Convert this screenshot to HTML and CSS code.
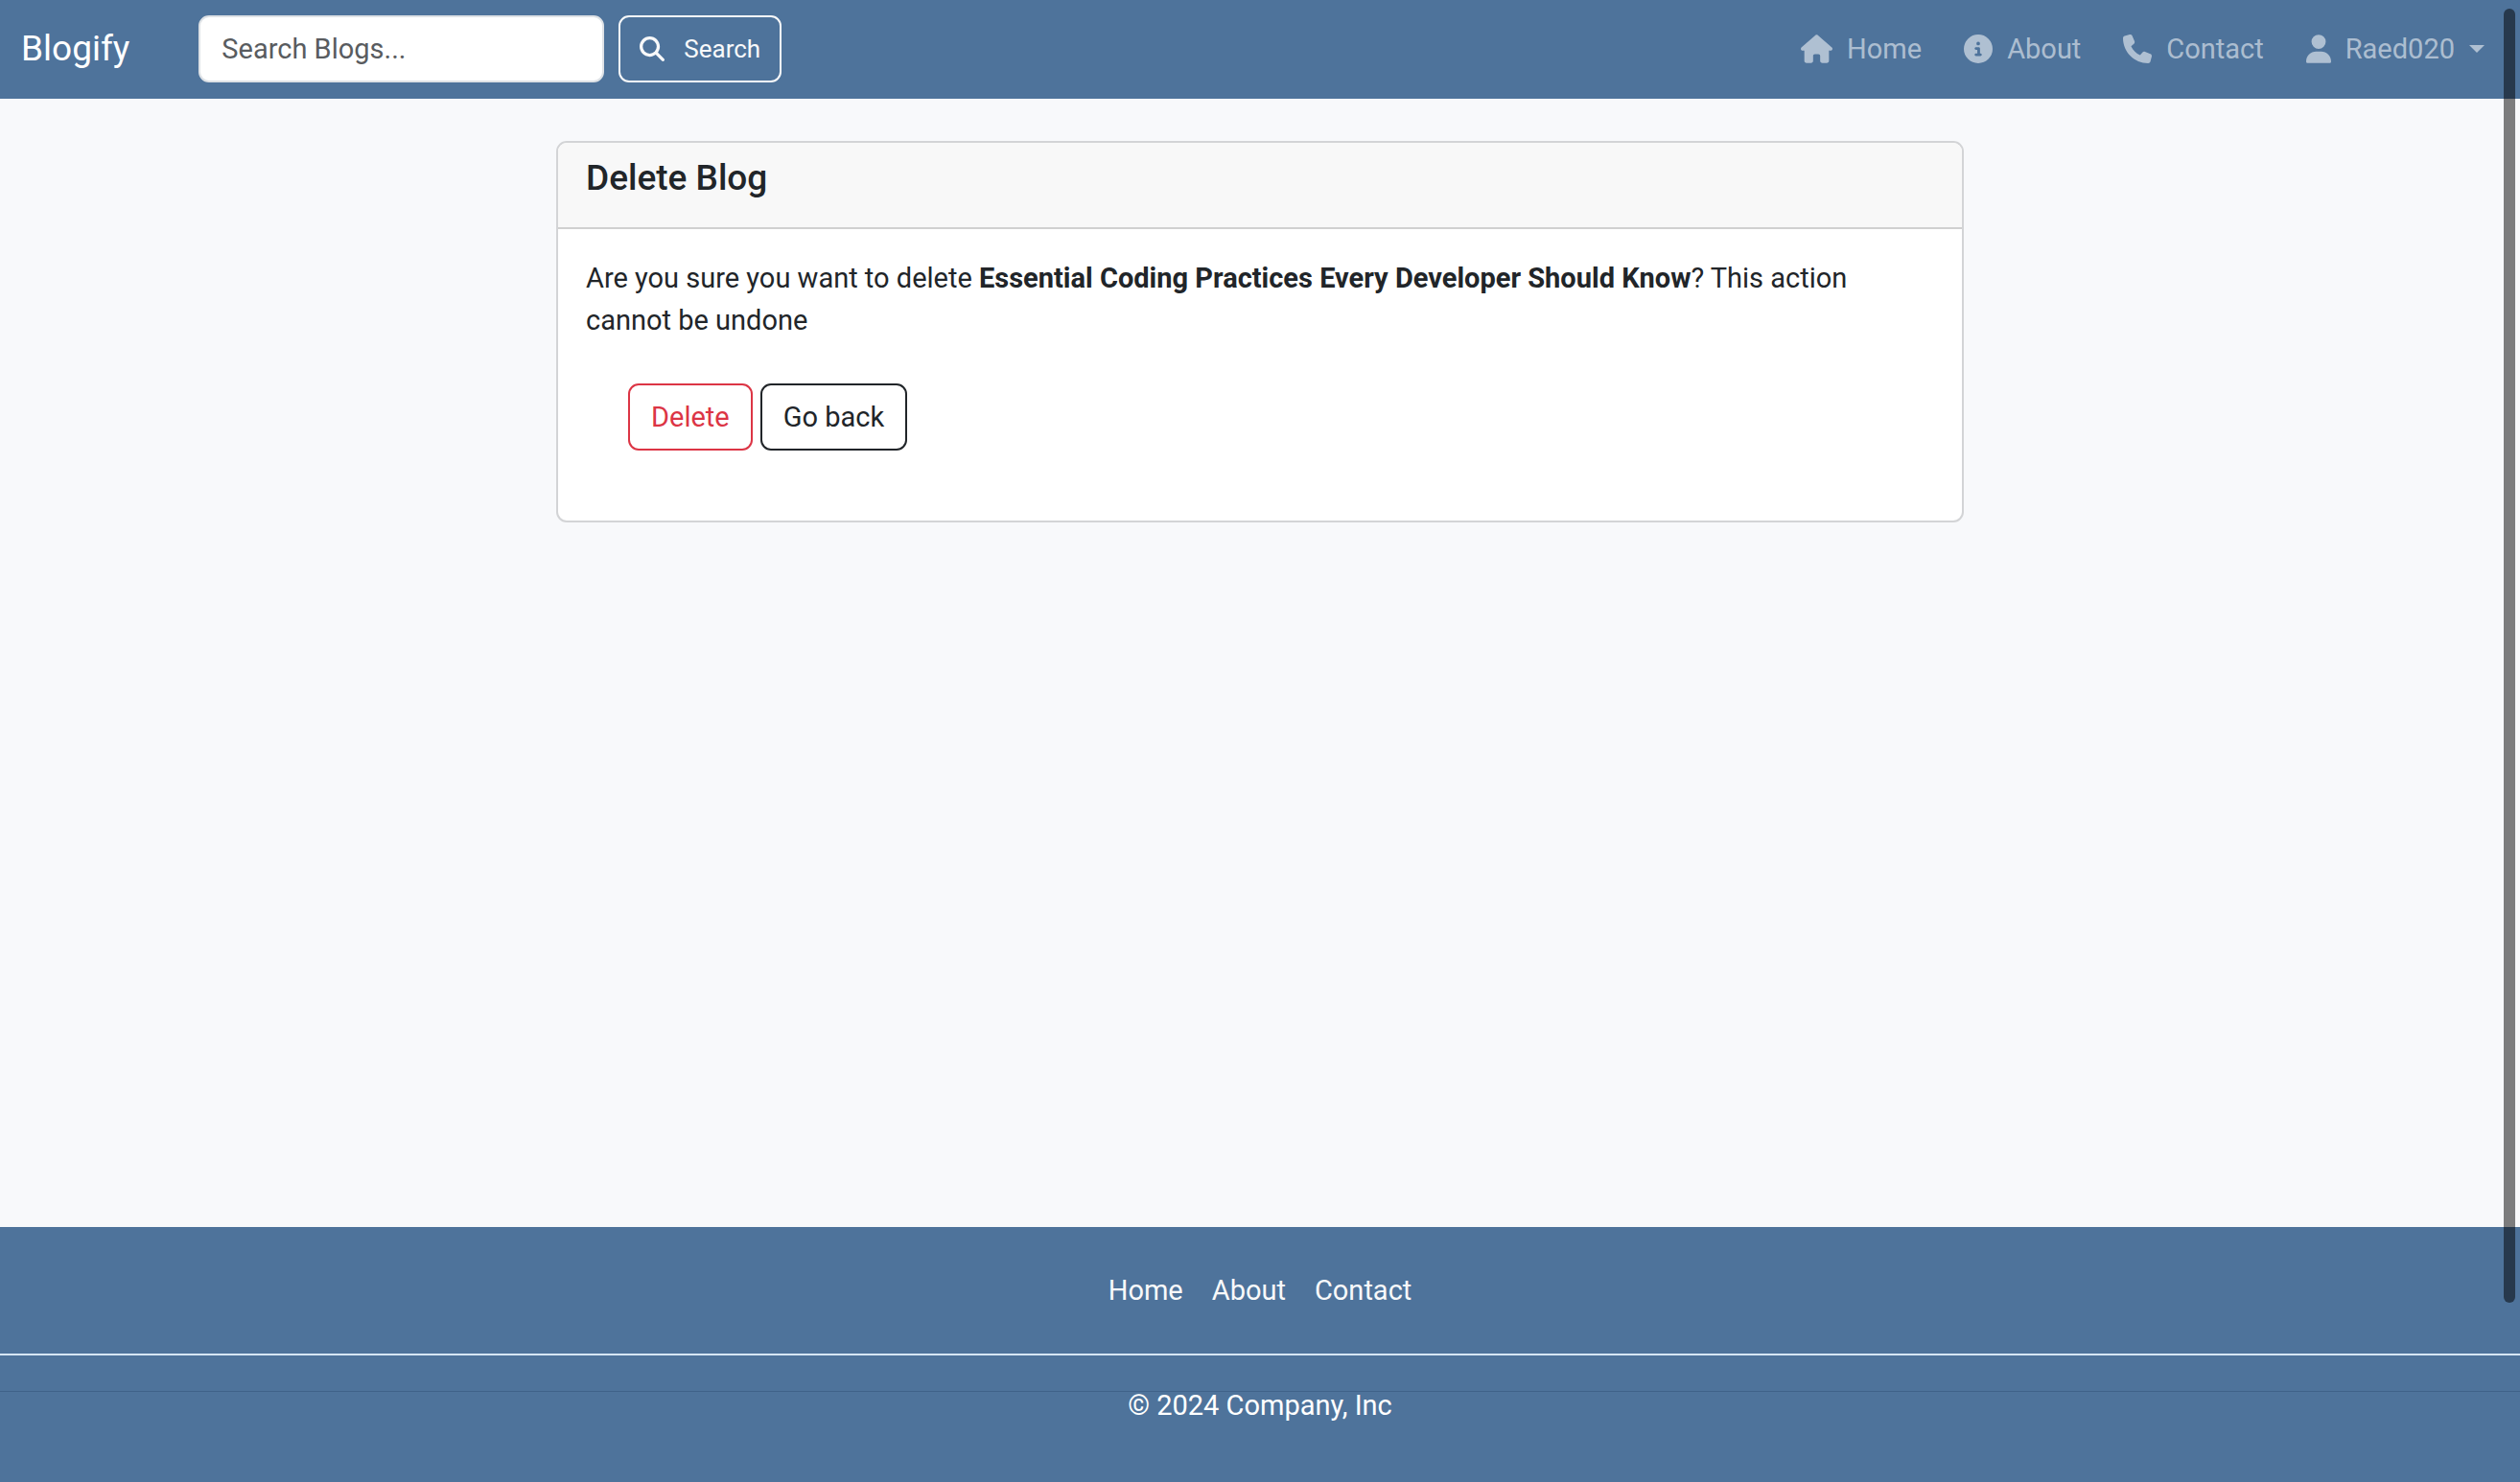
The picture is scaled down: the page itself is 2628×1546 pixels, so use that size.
FILE: index.html
```html
<!DOCTYPE html>
<html lang="en">
<head>
<meta charset="utf-8">
<meta name="viewport" content="width=device-width, initial-scale=1">
<title>Blogify - Delete Blog</title>
<link rel="stylesheet" href="styles.css">
</head>
<body>
<header class="navbar">
  <a class="brand" href="#">Blogify</a>
  <form class="search">
    <input class="search-input" type="search" placeholder="Search Blogs..." aria-label="Search Blogs">
    <button class="btn btn-light" type="submit">
      <svg class="icon icon-small" viewBox="0 0 512 512" aria-hidden="true"><path d="M416 208c0 45.900-14.900 88.300-40 122.700L502.600 457.400c12.500 12.500 12.500 32.800 0 45.300s-32.800 12.500-45.300 0L330.700 376c-34.400 25.200-76.800 40-122.700 40C93.100 416 0 322.900 0 208S93.100 0 208 0S416 93.100 416 208zM208 352a144 144 0 1 0 0-288 144 144 0 1 0 0 288z"/></svg>
      <span>Search</span>
    </button>
  </form>
  <nav class="menu" aria-label="Main">
    <a class="menu-link" href="#">
      <svg class="icon icon-wide" viewBox="0 0 576 512" aria-hidden="true"><path d="M575.800 255.500c0 18-15 32.100-32 32.100h-32l.7 160.200c0 2.700-.2 5.400-.5 8.100V472c0 22.100-17.900 40-40 40H456c-1.100 0-2.200 0-3.300-.1c-1.400 .1-2.800 .1-4.200 .1H416 392c-22.100 0-40-17.900-40-40V448 384c0-17.700-14.300-32-32-32H256c-17.700 0-32 14.300-32 32v64 24c0 22.100-17.900 40-40 40H160 128.100c-1.500 0-3-.1-4.500-.2c-1.200 .1-2.400 .2-3.600 .2H104c-22.100 0-40-17.900-40-40V360c0-.9 0-1.900 .1-2.800V287.600H32c-18 0-32-14-32-32.100c0-9 3-17 10-24L266.400 8c7-7 15-8 22-8s15 2 21 7L564.800 231.500c8 7 12 15 11 24z"/></svg>
      <span>Home</span>
    </a>
    <a class="menu-link" href="#">
      <svg class="icon" viewBox="0 0 512 512" aria-hidden="true"><path d="M256 512A256 256 0 1 0 256 0a256 256 0 1 0 0 512zM216 336h24V272H216c-13.300 0-24-10.700-24-24s10.700-24 24-24h48c13.300 0 24 10.700 24 24v88h8c13.300 0 24 10.700 24 24s-10.700 24-24 24H216c-13.300 0-24-10.700-24-24s10.700-24 24-24zm40-208a32 32 0 1 1 0 64 32 32 0 1 1 0-64z"/></svg>
      <span>About</span>
    </a>
    <a class="menu-link" href="#">
      <svg class="icon" viewBox="0 0 512 512" aria-hidden="true"><path d="M164.900 24.600c-7.700-18.600-28-28.500-47.400-23.200l-88 24C12.100 30.200 0 46 0 64C0 311.400 200.600 512 448 512c18 0 33.800-12.100 38.600-29.500l24-88c5.300-19.400-4.600-39.700-23.200-47.400l-96-40c-16.300-6.800-35.200-2.100-46.300 11.600L304.700 368C234.300 334.700 177.300 277.700 144 207.300L193.300 167c13.700-11.200 18.400-30 11.600-46.300l-40-96z"/></svg>
      <span>Contact</span>
    </a>
    <a class="menu-link" href="#">
      <svg class="icon icon-narrow" viewBox="0 0 448 512" aria-hidden="true"><path d="M224 256A128 128 0 1 0 224 0a128 128 0 1 0 0 256zm-45.700 48C79.800 304 0 383.800 0 482.300C0 498.700 13.300 512 29.700 512H418.300c16.400 0 29.700-13.300 29.700-29.700C448 383.800 368.200 304 269.700 304H178.300z"/></svg>
      <span>Raed020</span>
      <svg class="caret" viewBox="0 0 16 8" aria-hidden="true"><path d="M0 0h16L8 8z"/></svg>
    </a>
  </nav>
</header>
<main class="content">
  <section class="card">
    <div class="card-header"><h1 class="card-title">Delete Blog</h1></div>
    <div class="card-body">
      <p class="message">Are you sure you want to delete <strong>Essential Coding Practices Every Developer Should Know</strong>? This action cannot be undone</p>
      <form class="actions">
        <button class="btn btn-danger" type="submit">Delete</button>
        <button class="btn btn-dark" type="button">Go back</button>
      </form>
    </div>
  </section>
</main>
<footer class="footer">
  <nav class="footer-links" aria-label="Footer">
    <a class="footer-link" href="#">Home</a>
    <a class="footer-link" href="#">About</a>
    <a class="footer-link" href="#">Contact</a>
  </nav>
  <p class="copyright">© 2024 Company, Inc</p>
</footer>
<div class="scroll-thumb" aria-hidden="true"></div>
</body>
</html>
```
FILE: styles.css
```css
* { box-sizing: border-box; }

body {
  margin: 0;
  min-height: 100vh;
  display: flex;
  flex-direction: column;
  background: #f8f9fb;
  color: #212529;
  font-family: Roboto, "Liberation Sans", sans-serif;
  font-size: 29px;
  line-height: 44px;
}

a { text-decoration: none; }

.navbar {
  display: flex;
  align-items: center;
  padding: 16px 37px 17px 22px;
  background: #4e739b;
}

.brand {
  margin-right: 72px;
  color: #fff;
  font-size: 37px;
}

.search {
  display: flex;
  gap: 15px;
}

.search-input {
  width: 423px;
  height: 70px;
  padding: 0 22px;
  border: 2px solid #dee2e6;
  border-radius: 11px;
  background: #fff;
  color: #212529;
  font: inherit;
}

.search-input::placeholder {
  color: #595c5f;
  opacity: 1;
}

.btn {
  display: flex;
  align-items: center;
  height: 70px;
  padding: 0 22px;
  border: 2px solid currentColor;
  border-radius: 11px;
  background: transparent;
  font: inherit;
}

.btn-light {
  gap: 20px;
  padding: 0 20px;
  color: #f8f9fa;
  font-size: 26px;
}

.btn-danger { color: #dc3545; }
.btn-dark { color: #212529; }

.icon {
  width: 30px;
  height: 30px;
  fill: currentColor;
}

.icon-small { width: 26px; height: 26px; }
.icon-wide { width: 33px; }
.icon-narrow { width: 26px; }

.menu {
  display: flex;
  gap: 44px;
  margin-left: auto;
}

.menu-link {
  display: flex;
  align-items: center;
  gap: 15px;
  color: rgba(255, 255, 255, 0.55);
}

.caret {
  width: 16px;
  height: 8px;
  fill: currentColor;
}

.content {
  flex: 1;
  padding: 44px 22px;
}

.card {
  max-width: 1468px;
  margin: 0 auto;
  border: 2px solid #d3d4d6;
  border-radius: 11px;
  background: #fff;
  overflow: hidden;
}

.card-header {
  padding: 15px 29px 29px;
  border-bottom: 2px solid #d0d0d0;
  background: #f8f8f8;
}

.card-title {
  margin: 0;
  font-size: 37px;
  font-weight: 500;
}

.card-body { padding: 29px; }

.message { margin: 0; }

.actions {
  display: flex;
  gap: 8px;
  padding: 44px;
}

.footer {
  padding: 44px 0 66px;
  background: #4e739b;
  color: #fff;
  text-align: center;
}

.footer-links {
  display: flex;
  justify-content: center;
  gap: 30px;
  padding-bottom: 44px;
  border-bottom: 2px solid #d6e6f5;
}

.footer-link { color: #f8f9fa; }

.copyright {
  margin: 37px 0 0;
  border-top: 1px solid #3f6289;
  line-height: 28px;
}

.scroll-thumb {
  position: fixed;
  top: 9px;
  right: 5px;
  width: 12px;
  height: 1350px;
  border-radius: 6px;
  background: rgba(0, 0, 0, 0.5);
}
```
